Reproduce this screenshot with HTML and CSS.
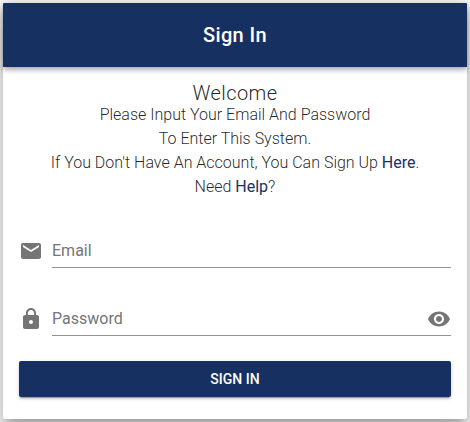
FILE: index.html
```html
<!DOCTYPE html>
<html lang="en">
<head>
<meta charset="utf-8">
<title>Sign In</title>
<link rel="stylesheet" href="styles.css">
</head>
<body>
<main class="card">
  <header class="toolbar">Sign In</header>
  <section class="intro">
    <h1>Welcome</h1>
    <p>Please Input Your Email And Password</p>
    <p>To Enter This System.</p>
    <p>If You Don't Have An Account, You Can Sign Up <a>Here</a>.</p>
    <p>Need <a>Help</a>?</p>
  </section>
  <form class="form">
    <div class="field">
      <svg class="icon" viewBox="0 0 24 24"><path d="M20 4H4c-1.1 0-2 .9-2 2v12c0 1.1.9 2 2 2h16c1.1 0 2-.9 2-2V6c0-1.1-.9-2-2-2zm0 4l-8 5-8-5V6l8 5 8-5v2z"/></svg>
      <div class="input"><span>Email</span></div>
    </div>
    <div class="field">
      <svg class="icon" viewBox="0 0 24 24"><path d="M18 8h-1V6c0-2.760-2.240-5-5-5S7 3.240 7 6v2H6c-1.100 0-2 .9-2 2v10c0 1.100.9 2 2 2h12c1.100 0 2-.9 2-2V10c0-1.100-.9-2-2-2zm-6 9c-1.100 0-2-.9-2-2s.9-2 2-2 2 .9 2 2-.9 2-2 2zm3.100-9H8.900V6c0-1.710 1.390-3.100 3.100-3.100s3.100 1.390 3.100 3.100v2z"/></svg>
      <div class="input"><span>Password</span>
        <svg class="icon" viewBox="0 0 24 24"><path d="M12 4.500C7 4.500 2.730 7.610 1 12c1.730 4.390 6 7.500 11 7.500s9.270-3.110 11-7.500c-1.730-4.390-6-7.500-11-7.500zM12 17c-2.760 0-5-2.240-5-5s2.240-5 5-5 5 2.240 5 5-2.240 5-5 5zm0-8c-1.660 0-3 1.340-3 3s1.340 3 3 3 3-1.340 3-3-1.340-3-3-3z"/></svg>
      </div>
    </div>
    <button class="submit" type="button">SIGN IN</button>
  </form>
</main>
</body>
</html>
```
FILE: styles.css
```css
* { box-sizing: border-box; }
body { margin: 0; padding: 3px; background: #fafafa; color: rgba(0,0,0,.87); font-family: Roboto, sans-serif; overflow: hidden; }
.card { height: 416px; border-radius: 2px; background: #fff; box-shadow: 0 7px 8px -4px rgba(0,0,0,.2), 0 12px 17px 2px rgba(0,0,0,.14), 0 5px 22px 4px rgba(0,0,0,.12); }
.toolbar { display: flex; align-items: center; justify-content: center; height: 64px; border-radius: 1px 1px 0 0; background: #163062; color: #fff; font-size: 20px; font-weight: 500; letter-spacing: .4px; box-shadow: 0 2px 4px -1px rgba(0,0,0,.2), 0 4px 5px rgba(0,0,0,.14), 0 1px 10px rgba(0,0,0,.12); }
.intro { padding-top: 16px; text-align: center; font-size: 16px; line-height: 24px; font-weight: 300; }
h1 { margin: 0; font-size: 20px; line-height: 20px; font-weight: 300; letter-spacing: .4px; }
p { margin: 0; }
a { color: #163062; font-weight: 400; }
.form { padding: 36px 16px 0; }
.field { display: flex; align-items: center; height: 32px; margin-bottom: 36px; }
.icon { width: 24px; height: 24px; flex: none; fill: #757575; }
.input { display: flex; align-items: center; justify-content: space-between; flex: 1; height: 33px; margin-left: 9px; border-bottom: 1px solid #949494; color: #757575; font-size: 16px; }
.submit { display: block; width: 100%; height: 36px; margin-top: -10px; border: 0; border-radius: 2px; background: #163062; color: #fff; font: 500 14px Roboto, sans-serif; box-shadow: 0 3px 1px -2px rgba(0,0,0,.2), 0 2px 2px rgba(0,0,0,.14), 0 1px 5px rgba(0,0,0,.12); }
```
